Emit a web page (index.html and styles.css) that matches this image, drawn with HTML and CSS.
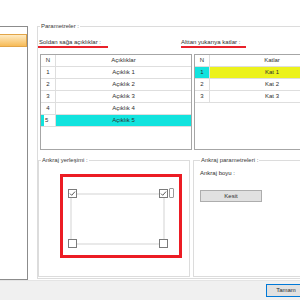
FILE: index.html
```html
<!DOCTYPE html>
<html lang="tr">
<head>
  <meta charset="UTF-8" />
  <title>Ankraj</title>
  <link rel="stylesheet" href="styles.css">
</head>
<body>
  <div class="window">
    <div class="window-body">
      <aside class="sidebar">
        <div class="sidebar-item"></div>
      </aside>

      <section class="group params">
        <div class="group-title">Parametreler :</div>

        <div class="label-row">
          <span class="mark">Soldan sağa açıklıklar :</span>
          <span class="mark mark-right">Alttan yukarıya katlar :</span>
        </div>

        <div class="grids">
          <div class="grid grid-left">
            <div class="grid-row head"><span>N</span><span>Açıklıklar</span></div>
            <div class="grid-row"><span>1</span><span>Açıklık 1</span></div>
            <div class="grid-row"><span>2</span><span>Açıklık 2</span></div>
            <div class="grid-row"><span>3</span><span>Açıklık 3</span></div>
            <div class="grid-row"><span>4</span><span>Açıklık 4</span></div>
            <div class="grid-row focused"><span><i class="editor">5</i></span><span>Açıklık 5</span></div>
          </div>
          <div class="grid grid-right">
            <div class="grid-row head"><span>N</span><span>Katlar</span></div>
            <div class="grid-row current"><span>1</span><span>Kat 1</span></div>
            <div class="grid-row"><span>2</span><span>Kat 2</span></div>
            <div class="grid-row"><span>3</span><span>Kat 3</span></div>
          </div>
        </div>

        <div class="subgroups">
          <div class="group subgroup placement">
            <div class="group-title">Ankraj yerleşimi :</div>
            <div class="redbox">
              <div class="diagram">
                <svg class="cb" viewBox="0 0 9 9"><rect x="0.5" y="0.5" width="8" height="8" fill="#fff" stroke="#7b7b7b"/><polyline points="2,4.6 3.7,6.3 7,2.6" fill="none" stroke="#5a5a5a" stroke-width="1"/></svg>
                <span class="hline"></span>
                <svg class="cb" viewBox="0 0 9 9"><rect x="0.5" y="0.5" width="8" height="8" fill="#fff" stroke="#7b7b7b"/><polyline points="2,4.6 3.7,6.3 7,2.6" fill="none" stroke="#5a5a5a" stroke-width="1"/></svg>
                <span class="slim"></span>

                <span class="vline vline-left"></span>
                <span></span>
                <span class="vline vline-right"></span>
                <span></span>

                <svg class="cb" viewBox="0 0 9 9"><rect x="0.5" y="0.5" width="8" height="8" fill="#fff" stroke="#7b7b7b"/></svg>
                <span class="hline"></span>
                <svg class="cb" viewBox="0 0 9 9"><rect x="0.5" y="0.5" width="8" height="8" fill="#fff" stroke="#7b7b7b"/></svg>
              </div>
            </div>
          </div>

          <div class="group subgroup anchor-params">
            <div class="group-title">Ankraj parametreleri :</div>
            <div class="field-label">Ankraj boyu :</div>
            <button class="btn btn-kesit">Kesit</button>
          </div>
        </div>
      </section>
    </div>

    <footer class="footer">
      <button class="btn btn-default">Tamam</button>
    </footer>
  </div>
</body>
</html>
```

FILE: styles.css
```css
* {
  margin: 0; padding: 0; box-sizing: border-box;
}

html, body {
  width: 300px;
  height: 300px;
  overflow: hidden;
  background: #fff;
}

body {
  font-family: "Liberation Sans", Arial, sans-serif;
  font-size: 6px;
  color: #2e2e2e;
}

/* janela cortada à direita, por isso mais larga que a tela */
.window {
  width: 320px;
  height: 300px;
  display: flex;
  flex-direction: column;
}

.window-body {
  flex: 1;
  display: flex;
  padding-top: 26px;
}

.sidebar {
  width: 28px;
  flex-shrink: 0;
  border: 1px solid #8c8c8c;
  border-left: none;
}

.sidebar-item {
  margin-top: 7px;
  height: 13px;
  border: 1px solid #e2a548;
  border-left: none;
  background: linear-gradient(#feebc4, #f7bb57);
}

.group {
  border: 1px solid #dcdcdc;
}

.group-title {
  display: table;
  margin: -5px 0 0 2px;
  padding: 0 1px;
  line-height: 8px;
  background: #fff;
  color: #3a3a3a;
}

.params {
  width: 290px;
  flex-shrink: 0;
  margin: 0 0 1px 9px;
}

.label-row {
  display: grid;
  grid-template-columns: 143px 1fr;
  margin-top: 8px;
}

.mark {
  justify-self: start;
  line-height: 8px;
  padding: 0 7px 0 1px;
  border-bottom: 2px solid #e8222b;
}

.mark-right {
  padding: 0 6px 0 0;
}

.grids {
  display: flex;
  gap: 2px;
  margin: 6px 0 0 2px;
}

.grid {
  height: 96px;
  flex-shrink: 0;
  border: 1px solid #a6a6a6;
  background: #fff;
}

.grid-left { width: 152px; }
.grid-right { width: 141px; }

.grid-row {
  display: grid;
  grid-template-columns: 15px 1fr;
  height: 12px;
  line-height: 11px;
  text-align: center;
  border-bottom: 1px solid #dedede;
}

.grid-row > span:first-child {
  border-right: 1px solid #dedede;
}

.grid-row.focused {
  background: #12e3de;
}

.editor {
  display: block;
  height: 11px;
  margin-left: 3px;
  padding-left: 1px;
  font-style: normal;
  text-align: left;
  background: #fff;
}

.grid-row.current > span:first-child { background: #12e3de; }
.grid-row.current > span:last-child { background: #ecf21c; }

.subgroups {
  display: flex;
  gap: 3px;
  margin-top: 10px;
}

.subgroup {
  height: 117px;
  flex-shrink: 0;
}

.placement { width: 152px; }

.anchor-params {
  width: 140px;
  padding-left: 6px;
}

.anchor-params .group-title {
  margin-left: 0;
}

.redbox {
  width: 122px;
  height: 84px;
  margin: 10px 0 0 21px;
  padding: 12px 0 0 5px;
  border: 3px solid #ec1c24;
}

.diagram {
  display: grid;
  grid-template-columns: 9px 82px 9px 6px;
  grid-template-rows: 9px 41px 9px;
}

.cb {
  display: block;
  width: 9px;
  height: 9px;
}

.hline {
  height: 2px;
  align-self: center;
  background: #e9e9e9;
}

.vline {
  width: 2px;
  background: #e9e9e9;
}

.vline-left { margin-left: 2px; }
.vline-right { justify-self: center; }

.slim {
  width: 5px;
  height: 10px;
  margin: -1px 0 0 1px;
  border: 1px solid #9a9a9a;
  border-radius: 1px;
  background: #fff;
}

.field-label {
  margin-top: 5px;
  line-height: 8px;
}

.btn {
  display: block;
  font: inherit;
  color: #2e2e2e;
  background: #e1e1e1;
  border: 1px solid #adadad;
  line-height: 10px;
}

.btn-kesit {
  width: 62px;
  height: 12px;
  margin-top: 13px;
}

.footer {
  height: 20px;
  display: flex;
  justify-content: flex-end;
  padding: 3px 14px 0 0;
  background: #f0f0f0;
  border-top: 1px solid #e4e4e4;
}

.btn-default {
  width: 40px;
  height: 13px;
  line-height: 11px;
  border-color: #0078d7;
}
```
